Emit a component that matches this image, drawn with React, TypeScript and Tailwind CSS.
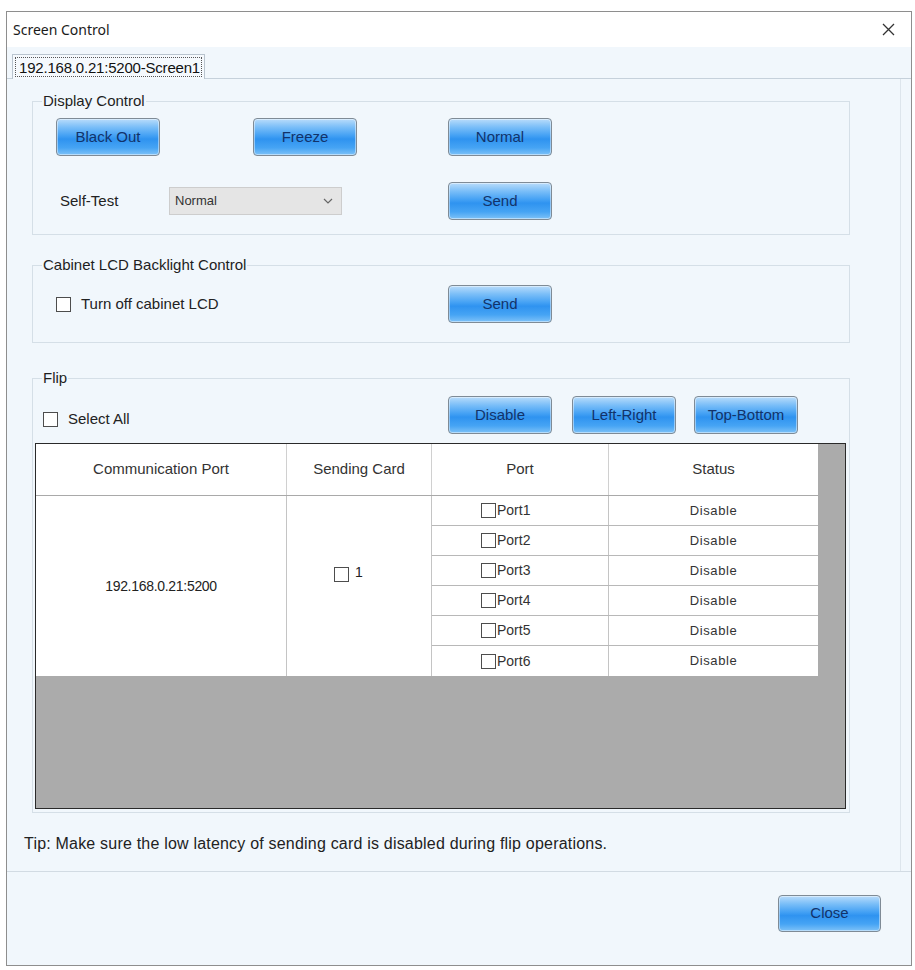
import React from 'react'

const btnClass =
  "flex h-[38px] w-[104px] items-center justify-center rounded-[4px] border border-[#7f8b96] bg-[linear-gradient(to_bottom,#b9dcfb_0%,#7cbff8_22%,#44a1f4_46%,#2f93f0_56%,#46a4f4_80%,#7ec2f8_100%)] text-[15px] text-[#12336a] shadow-[inset_0_0_0_1px_rgba(255,255,255,0.45)]"

function Btn({ label }: { label: string }) {
  return <div className={btnClass}>{label}</div>
}

function Box({ size = 15 }: { size?: number }) {
  return (
    <span
      className="inline-block shrink-0 border border-[#4d4d4d] bg-white"
      style={{ width: size, height: size }}
    />
  )
}

function Group({ title, children }: { title: string; children: React.ReactNode }) {
  return (
    <fieldset className="ml-[25px] w-[818px] border border-[#d5dfe7]">
      <legend className="ml-[9px] px-[1px] text-[15px] leading-[16px] text-[#1e1e1e]">{title}</legend>
      {children}
    </fieldset>
  )
}

const ports = ['Port1', 'Port2', 'Port3', 'Port4', 'Port5', 'Port6']

export default function App() {
  return (
    <div className="h-[970px] w-[915px] bg-white pl-[6px] pt-[11px] font-['Liberation_Sans',Arial,sans-serif] text-[#222]">
      <div className="flex h-[955px] w-[906px] flex-col border border-[#8e8e8e] bg-[#f1f7fc]">
        {/* title bar */}
        <div className="flex h-[35px] items-center justify-between bg-white pl-[6px] pr-[16px]">
          <span className="font-['Noto_Sans',sans-serif] text-[14px] text-[#1a1a1a]">Screen Control</span>
          <svg width="13" height="13" viewBox="0 0 13 13">
            <path d="M1 1L12 12M12 1L1 12" stroke="#333" strokeWidth="1.3" />
          </svg>
        </div>

        {/* tab strip */}
        <div className="flex h-[32px] items-end">
          <div className="h-px w-[5px] bg-[#c6d1db]" />
          <div className="flex h-[25px] w-[193px] items-stretch border border-b-0 border-[#b9c4ce] bg-[#f5f9fd] p-[2px]">
            <div className="flex flex-1 items-center overflow-hidden whitespace-nowrap border border-dotted border-[#555] pl-[3px] text-[15px] leading-none tracking-[-0.2px] text-[#111]">
              192.168.0.21:5200-Screen1
            </div>
          </div>
          <div className="h-px flex-1 bg-[#c6d1db]" />
        </div>

        {/* panel */}
        <div className="h-[793px] border-b border-[#d2dbe3]">
          <div className="mr-[10px] flex h-full flex-col border-r border-[#dde5ec] pt-[14px]">
            <Group title="Display Control">
              <div className="flex pl-[23px] pt-[9px]">
                <Btn label="Black Out" />
                <div className="ml-[93px]">
                  <Btn label="Freeze" />
                </div>
                <div className="ml-[91px]">
                  <Btn label="Normal" />
                </div>
              </div>
              <div className="mt-[26px] flex items-center pb-[14px] pl-[27px]">
                <span className="w-[109px] text-[15px] text-[#222]">Self-Test</span>
                <div className="flex h-[28px] w-[173px] items-center justify-between border border-[#cdcdcd] bg-[#e5e5e5] pl-[5px] pr-[8px]">
                  <span className="text-[13px] text-[#333]">Normal</span>
                  <svg width="10" height="6" viewBox="0 0 10 6">
                    <path d="M1 1L5 5L9 1" fill="none" stroke="#666" strokeWidth="1.2" />
                  </svg>
                </div>
                <div className="ml-[106px]">
                  <Btn label="Send" />
                </div>
              </div>
            </Group>

            <div className="mt-[22px]">
              <Group title="Cabinet LCD Backlight Control">
                <div className="flex items-center pb-[19px] pt-[12px]">
                  <div className="flex w-[415px] items-center gap-[10px] pl-[23px]">
                    <Box />
                    <span className="text-[15px] text-[#222]">Turn off cabinet LCD</span>
                  </div>
                  <Btn label="Send" />
                </div>
              </Group>
            </div>

            <div className="mt-[27px]">
              <Group title="Flip">
                <div className="flex pt-[10px]">
                  <div className="flex w-[415px] items-center gap-[10px] pl-[10px] pt-[9px]">
                    <Box />
                    <span className="text-[15px] text-[#222]">Select All</span>
                  </div>
                  <Btn label="Disable" />
                  <div className="ml-[20px]">
                    <Btn label="Left-Right" />
                  </div>
                  <div className="ml-[18px]">
                    <Btn label="Top-Bottom" />
                  </div>
                </div>

                <div className="mb-[3px] ml-[2px] mt-[9px] h-[366px] w-[811px] border border-[#2a2a2a] bg-[#ababab]">
                  <div className="w-[782px] bg-white">
                    <div className="grid h-[52px] grid-cols-[251px_145px_177px_209px] border-b border-[#a9a9a9] text-[15px] text-[#333]">
                      <div className="flex items-center justify-center border-r border-[#d0d0d0]">Communication Port</div>
                      <div className="flex items-center justify-center border-r border-[#d0d0d0]">Sending Card</div>
                      <div className="flex items-center justify-center border-r border-[#d0d0d0]">Port</div>
                      <div className="flex items-center justify-center">Status</div>
                    </div>
                    <div className="grid h-[180px] grid-cols-[251px_145px_386px] text-[#222]">
                      <div className="flex items-center justify-center border-r border-[#c4c4c4] text-[14px] tracking-[-0.3px]">
                        192.168.0.21:5200
                      </div>
                      <div className="flex items-center gap-[6px] border-r border-[#c4c4c4] pb-[24px] pl-[47px] text-[14px]">
                        <Box />
                        <span className="-mt-[4px]">1</span>
                      </div>
                      <div className="flex flex-col">
                        {ports.map((p, i) => (
                          <div
                            key={p}
                            className={`grid h-[30px] grid-cols-[177px_209px] ${i < ports.length - 1 ? 'border-b border-[#b8b8b8]' : ''}`}
                          >
                            <div className="flex items-center gap-[1px] border-r border-[#c4c4c4] pl-[49px] text-[14px] text-[#333]">
                              <Box />
                              <span>{p}</span>
                            </div>
                            <div className="flex items-center justify-center text-[13px] tracking-[0.6px] text-[#333]">
                              Disable
                            </div>
                          </div>
                        ))}
                      </div>
                    </div>
                  </div>
                </div>
              </Group>
            </div>

            <div className="ml-[17px] mt-[22px] text-[16px] leading-[18px] tracking-[0.2px] text-[#222]">
              Tip: Make sure the low latency of sending card is disabled during flip operations.
            </div>
          </div>
        </div>

        {/* footer */}
        <div className="flex flex-1 justify-end pr-[30px] pt-[23px]">
          <div className={btnClass.replace('h-[38px] w-[104px]', 'h-[37px] w-[103px]')}>Close</div>
        </div>
      </div>
    </div>
  )
}
